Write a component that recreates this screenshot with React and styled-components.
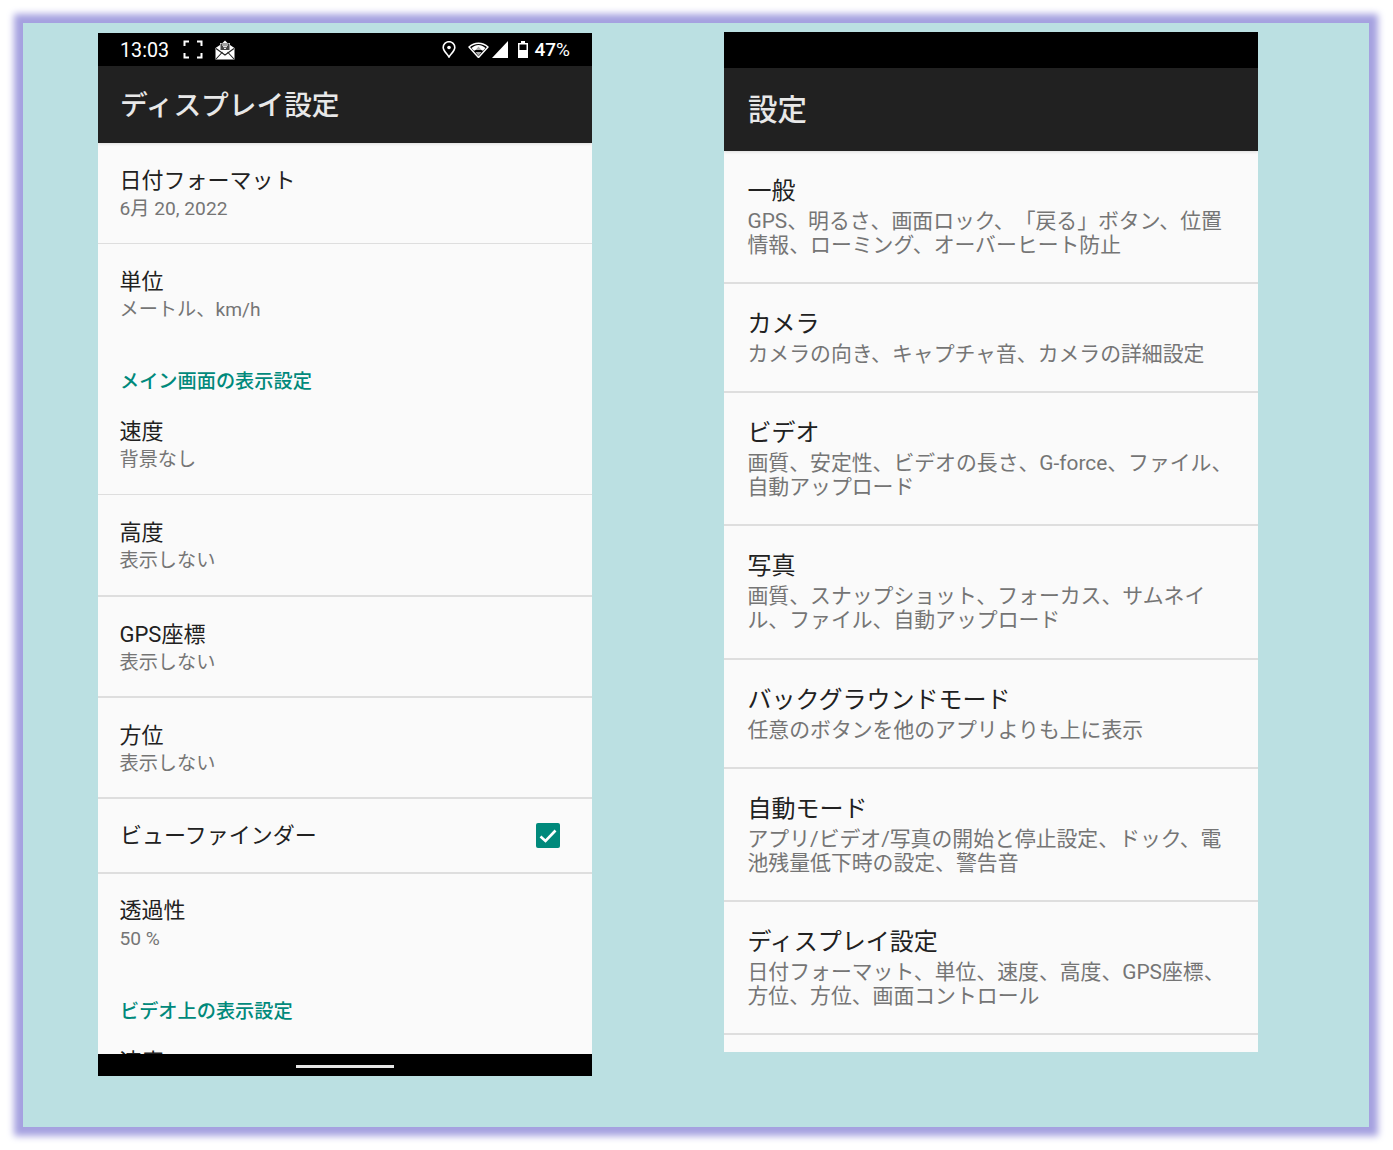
import React from "react";
import styled, { createGlobalStyle } from "styled-components";

const Global = createGlobalStyle`
  html, body { margin: 0; padding: 0; background: #fff; }
  body { font-family: Roboto, "Noto Sans CJK JP", sans-serif; text-spacing-trim: space-all; }
`;
const Page = styled.div`
  width: 1393px; height: 1150px; padding: 23px 24px 23px 23px; box-sizing: border-box; overflow: hidden;
`;
const Frame = styled.div`
  height: 1104px; background: #bbe0e2; box-shadow: 0 0 7px 9px #a5a1e0;
  display: flex; align-items: flex-start;
`;
const Phone = styled.div`
  width: ${p => p.$w}px; height: ${p => p.$h}px; margin-left: ${p => p.$left}px; margin-top: ${p => p.$top}px;
  display: flex; flex-direction: column; background: #fafafa; overflow: hidden; flex: none;
`;
const StatusBar = styled.div`
  height: ${p => p.$h}px; flex: none; background: #000; color: #fff;
  display: flex; align-items: center; padding: 0 22px;
`;
const Time = styled.span` font-weight: 400; font-size: 19.7px; margin: 2px 14px 0 0; `;
const Spacer = styled.div` flex: 1; `;
const Percent = styled.span` font-size: 19px; margin-left: 6px; font-weight: 500; `;
const PercentSign = styled.span` font-weight: 400; `;
const AppBar = styled.div`
  height: ${p => p.$h}px; flex: none; background: #212121; color: #e8e8e8; box-sizing: border-box;
  display: flex; align-items: center; padding: ${p => p.$pad}; font-size: ${p => p.$size}px; font-weight: 500;
  position: relative; z-index: 1; box-shadow: 0 1px 3px rgba(0,0,0,.12);
`;
const List = styled.div` flex: 1; min-height: 0; overflow: hidden; `;
const Row = styled.div`
  height: ${p => p.$h}px; box-sizing: border-box; padding: ${p => p.$pt}px ${p => p.$pr}px 0 ${p => p.$pl}px;
  border-bottom: ${p => p.$line || 0}px solid #dedede;
`;
const RowTitle = styled.div`
  font-size: ${p => p.$size}px; line-height: ${p => p.$lh}px; color: #212121; margin-bottom: ${p => p.$mb || 0}px;
`;
const RowSub = styled.div`
  font-size: ${p => p.$size}px; line-height: ${p => p.$lh}px; color: #757575; white-space: pre-line;
`;
const CheckRow = styled.div`
  height: 75px; box-sizing: border-box; padding: 0 32px 0 22px; border-bottom: 2px solid #dedede;
  display: flex; align-items: center; justify-content: space-between;
`;
const CheckBox = styled.div`
  width: 24px; height: 25px; border-radius: 2px; background: #00897b; display: flex; align-items: center; justify-content: center;
`;
const Section = styled.div`
  height: ${p => p.$h}px; box-sizing: border-box; padding: ${p => p.$pt}px 22px 0;
  font-size: 19.2px; line-height: 24px; color: #00897b; font-weight: 500;
`;
const NavBar = styled.div`
  height: 22px; flex: none; background: #000; display: flex; justify-content: center; padding-top: 11px; box-sizing: border-box;
`;
const Handle = styled.div` width: 98px; height: 3px; background: #e6e6e6; `;
const Ico = styled.svg` display: block; flex: none; margin: ${p => p.$m || 0}; `;

const L = { $size: 22, $lh: 30 };
const LS = { $size: 19.2, $lh: 25 };
const leftA = [
  { t: "日付フォーマット", s: "6月 20, 2022", h: 101, pt: 23, line: 1 },
  { t: "単位", s: "メートル、km/h", h: 101, pt: 23 },
];
const leftB = [
  { t: "速度", s: "背景なし", h: 101, pt: 23, line: 1 },
  { t: "高度", s: "表示しない", h: 102, pt: 23, line: 2 },
  { t: "GPS座標", s: "表示しない", h: 101, pt: 23, line: 2 },
  { t: "方位", s: "表示しない", h: 101, pt: 23, line: 2 },
];
const rightRows = [
  { t: "一般", s: "GPS、明るさ、画面ロック、「戻る」ボタン、位置\n情報、ローミング、オーバーヒート防止", h: 133 },
  { t: "カメラ", s: "カメラの向き、キャプチャ音、カメラの詳細設定", h: 109 },
  { t: "ビデオ", s: "画質、安定性、ビデオの長さ、G-force、ファイル、\n自動アップロード", h: 133 },
  { t: "写真", s: "画質、スナップショット、フォーカス、サムネイ\nル、ファイル、自動アップロード", h: 134 },
  { t: "バックグラウンドモード", s: "任意のボタンを他のアプリよりも上に表示", h: 109 },
  { t: "自動モード", s: "アプリ/ビデオ/写真の開始と停止設定、ドック、電\n池残量低下時の設定、警告音", h: 133 },
  { t: "ディスプレイ設定", s: "日付フォーマット、単位、速度、高度、GPS座標、\n方位、方位、画面コントロール", h: 133 },
];

const LeftRow = ({ r }) => (
  <Row $h={r.h} $pt={r.pt} $pl={21.5} $pr={22} $line={r.line}>
    <RowTitle {...L}>{r.t}</RowTitle>
    <RowSub {...LS}>{r.s}</RowSub>
  </Row>
);

const Focus = () => (
  <Ico width="20" height="19" viewBox="0 0 20 19" fill="none" stroke="#fff" strokeWidth="2" $m="0 12px 0 0">
    <path d="M6 1.500H1.500V6M14 1.500h4.500V6M6 17.500H1.500V13M14 17.500h4.500V13" />
  </Ico>
);
const Mail = () => (
  <Ico width="20" height="20" viewBox="0 0 20 20">
    <path d="M0.500 8L5 5V3h2.500L10 0.500 12.500 3H15v2l4.500 3v11.500H0.500z" fill="#fff" />
    <rect x="5.500" y="3.500" width="9" height="6.500" fill="#444" />
    <path d="M7 5h6M8 6.700h4M9 8.400h2" stroke="#fff" strokeWidth="1" />
    <path d="M1 8.500l9 6.500 9-6.500M1 19l6.500-7M19 19l-6.500-7" stroke="#222" strokeWidth="1.100" fill="none" />
  </Ico>
);
const Pin = () => (
  <Ico width="14" height="17" viewBox="0 0 14 17" fill="none" $m="0 12px 0 0">
    <path d="M7 16C4.300 12 1.200 9.700 1.200 6.500a5.800 5.800 0 0 1 11.600 0C12.800 9.700 9.700 12 7 16z" stroke="#fff" strokeWidth="1.600" />
    <circle cx="7" cy="6.500" r="1.800" fill="#fff" />
  </Ico>
);
const Wifi = () => (
  <Ico width="21" height="16" viewBox="0 0 21 16" fill="none">
    <path d="M1 5c5.500-5 13.500-5 19 0l-9.500 10.500z" stroke="#fff" strokeWidth="1.500" strokeLinejoin="round" />
    <path d="M3.500 6c4.500-4 9.500-4 14 0l-2.500 2.800c-3-2-6-2-9 0z" fill="#fff" />
    <path d="M10.500 4.500l3 3.500h-6zM10.500 14l-3-4h6z" fill="#aaa" />
  </Ico>
);
const Signal = () => (
  <Ico width="16" height="17" viewBox="0 0 16 17" $m="0 10px 0 3px">
    <path d="M16 0v17H0z" fill="#fff" />
  </Ico>
);
const Battery = () => (
  <Ico width="10" height="17" viewBox="0 0 10 17">
    <path d="M3 0h4v2h3v15H0V2h3z" fill="#fff" />
    <rect x="1.500" y="3.500" width="7" height="5.500" fill="#000" />
  </Ico>
);

export default function App() {
  return (
    <Page>
      <Global />
      <Frame>
        <Phone $w={494} $h={1043} $left={75} $top={10}>
          <StatusBar $h={33}>
            <Time>13:03</Time>
            <Focus />
            <Mail />
            <Spacer />
            <Pin />
            <Wifi />
            <Signal />
            <Battery />
            <Percent>47<PercentSign>%</PercentSign></Percent>
          </StatusBar>
          <AppBar $h={77} $pad="0 22px 4px" $size={27.7}>ディスプレイ設定</AppBar>
          <List>
            {leftA.map(r => <LeftRow key={r.t} r={r} />)}
            <Section $h={49} $pt={24.5}>メイン画面の表示設定</Section>
            {leftB.map(r => <LeftRow key={r.t} r={r} />)}
            <CheckRow>
              <RowTitle {...L}>ビューファインダー</RowTitle>
              <CheckBox>
                <svg width="18" height="14" viewBox="0 0 18 14" fill="none" stroke="#fff" strokeWidth="2.600">
                  <path d="M1.500 7.500l5 4.500L16.500 1.500" />
                </svg>
              </CheckBox>
            </CheckRow>
            <LeftRow r={{ t: "透過性", s: "50 %", h: 101, pt: 22 }} />
            <Section $h={49} $pt={24.5}>ビデオ上の表示設定</Section>
            <LeftRow r={{ t: "速度", s: "", h: 101, pt: 23 }} />
          </List>
          <NavBar><Handle /></NavBar>
        </Phone>
        <Phone $w={534} $h={1020} $left={132} $top={9}>
          <StatusBar $h={36} />
          <AppBar $h={83} $pad="0 24px 6px" $size={29.5}>設定</AppBar>
          <List>
            {rightRows.map(r => (
              <Row key={r.t} $h={r.h} $pt={25} $pl={23.5} $pr={16} $line={2}>
                <RowTitle $size={24} $lh={30} $mb={3}>{r.t}</RowTitle>
                <RowSub $size={20.85} $lh={24}>{r.s}</RowSub>
              </Row>
            ))}
          </List>
        </Phone>
      </Frame>
    </Page>
  );
}
